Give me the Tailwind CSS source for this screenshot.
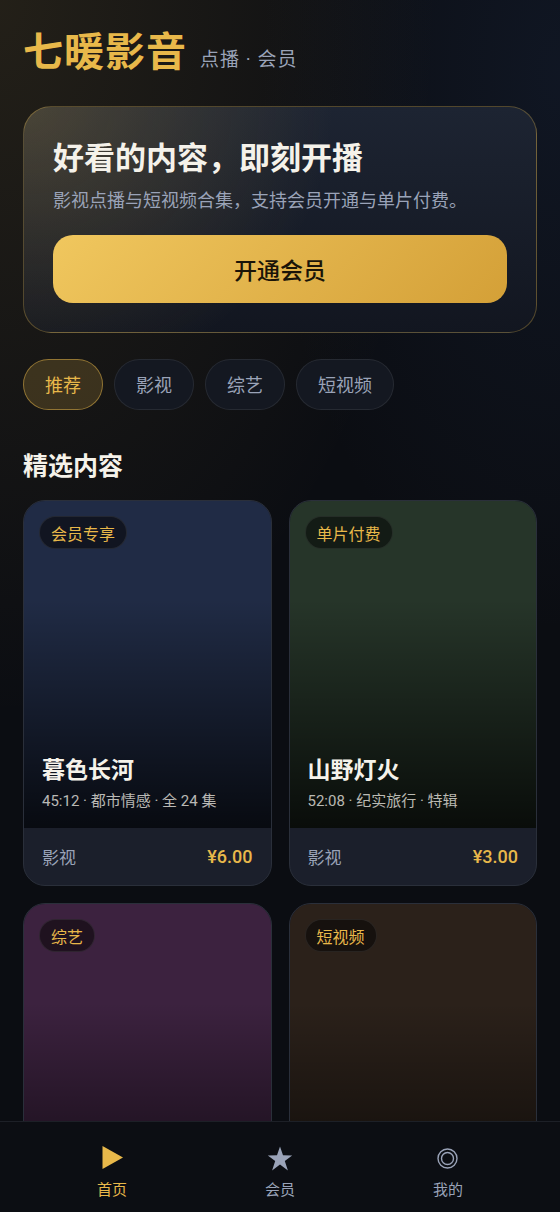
<!DOCTYPE html>
<html lang="zh-CN">
<head>
  <meta charset="UTF-8" />
  <meta name="viewport" content="width=device-width, initial-scale=1.0" />
  <title>七暖影音</title>
  <script src="https://cdn.jsdelivr.net/npm/@tailwindcss/browser@4"></script>
  <style>
    body {
      font-family: 'Noto Sans CJK SC', sans-serif;
      background:
        radial-gradient(ellipse 440px 720px at 0% 0%, rgba(232, 184, 74, .11), transparent),
        radial-gradient(ellipse 300px 560px at 100% 6%, rgba(50, 85, 150, .13), transparent),
        #0b0d12;
    }
    .num {
      font-family: Roboto, 'Noto Sans CJK SC', sans-serif;
    }
    .hero {
      background:
        radial-gradient(ellipse 310px 280px at 0% 0%, rgba(232, 184, 74, .22), transparent),
        linear-gradient(180deg, #1d2432, #121620);
    }
    .shade {
      background: linear-gradient(180deg, transparent 30%, rgba(0, 0, 0, .76));
    }
  </style>
</head>
<body class="h-dvh flex flex-col overflow-hidden text-[#f5f2ea]">
  <main class="flex-1 min-h-0 overflow-y-auto [scrollbar-width:none] px-[23px] pb-6">
    <header class="flex items-baseline gap-[13px] pt-[19px] tracking-[1px]">
      <h1 class="text-[40px] leading-[60px] font-bold text-[#e8b84a]">七暖影音</h1>
      <p class="num text-[19px] leading-[28px] text-[#9aa3b8]">点播 · 会员</p>
    </header>

    <section class="hero mt-[27px] rounded-[28px] border border-[#e8b84a]/30 px-[29px] pt-[27px] pb-[29px]">
      <h2 class="text-[31px] leading-[44px] font-bold">好看的内容，即刻开播</h2>
      <p class="mt-[5px] text-[18px] leading-[32px] text-[#9aa3b8]">影视点播与短视频合集，支持会员开通与单片付费。</p>
      <button class="mt-5 w-full h-[68px] rounded-[20px] bg-linear-135 from-[#f0c75e] to-[#d4a037] text-[23px] font-medium text-[#1a1408]">开通会员</button>
    </section>

    <div class="flex gap-[11px] mt-[26px] text-[18px] text-[#9aa3b8]">
      <button class="h-[51px] px-[21px] rounded-full border border-[#e8b84a]/50 bg-[#e8b84a]/18 text-[#e8b84a]">推荐</button>
      <button class="h-[51px] px-[21px] rounded-full border border-white/8 bg-[#141821]">影视</button>
      <button class="h-[51px] px-[21px] rounded-full border border-white/8 bg-[#141821]">综艺</button>
      <button class="h-[51px] px-[21px] rounded-full border border-white/8 bg-[#141821]">短视频</button>
    </div>

    <h2 class="mt-9 text-[25px] leading-[36px] font-bold">精选内容</h2>

    <div class="grid grid-cols-2 gap-[17px] mt-[18px]">
      <a href="#" class="block overflow-hidden rounded-[22px] border border-[#2a2f3a] bg-[#1b1f2b]">
        <div class="relative aspect-[64/85] bg-[#202b45]">
          <div class="shade h-full flex flex-col justify-end px-[18px] pb-[15px]">
            <h3 class="text-[23px] leading-[32px] font-bold">暮色长河</h3>
            <p class="num mt-[5px] text-[15px] leading-[24px] text-[#f5f2ea]/75">45:12 · 都市情感 · 全 24 集</p>
          </div>
          <span class="absolute top-[15px] left-[15px] h-[33px] px-[11px] flex items-center rounded-full border border-white/8 bg-[#0b0d12]/70 text-[16px] text-[#e8b84a]">会员专享</span>
        </div>
        <div class="h-[57px] flex items-center justify-between px-[18px]">
          <span class="text-[17px] text-[#9aa3b8]">影视</span>
          <span class="num text-[18px] font-medium text-[#e8b84a]">¥6.00</span>
        </div>
      </a>

      <a href="#" class="block overflow-hidden rounded-[22px] border border-[#2a2f3a] bg-[#1b1f2b]">
        <div class="relative aspect-[64/85] bg-[#263529]">
          <div class="shade h-full flex flex-col justify-end px-[18px] pb-[15px]">
            <h3 class="text-[23px] leading-[32px] font-bold">山野灯火</h3>
            <p class="num mt-[5px] text-[15px] leading-[24px] text-[#f5f2ea]/75">52:08 · 纪实旅行 · 特辑</p>
          </div>
          <span class="absolute top-[15px] left-[15px] h-[33px] px-[11px] flex items-center rounded-full border border-white/8 bg-[#0c110d]/70 text-[16px] text-[#e8b84a]">单片付费</span>
        </div>
        <div class="h-[57px] flex items-center justify-between px-[18px]">
          <span class="text-[17px] text-[#9aa3b8]">影视</span>
          <span class="num text-[18px] font-medium text-[#e8b84a]">¥3.00</span>
        </div>
      </a>

      <a href="#" class="block overflow-hidden rounded-[22px] border border-[#2a2f3a] bg-[#1b1f2b]">
        <div class="relative aspect-[64/85] bg-[#3c223f]">
          <div class="shade h-full"></div>
          <span class="absolute top-[15px] left-[15px] h-[33px] px-[11px] flex items-center rounded-full border border-white/8 bg-[#120b13]/70 text-[16px] text-[#e8b84a]">综艺</span>
        </div>
      </a>

      <a href="#" class="block overflow-hidden rounded-[22px] border border-[#2a2f3a] bg-[#1b1f2b]">
        <div class="relative aspect-[64/85] bg-[#2b211a]">
          <div class="shade h-full"></div>
          <span class="absolute top-[15px] left-[15px] h-[33px] px-[11px] flex items-center rounded-full border border-white/8 bg-[#0e0c0a]/70 text-[16px] text-[#e8b84a]">短视频</span>
        </div>
      </a>
    </div>
  </main>

  <nav class="grid grid-cols-3 px-7 pt-[22px] pb-[11px] border-t border-[#1d2027] bg-[#0c0e13] text-[15px] leading-[24px] text-[#9aa3b8]">
    <a href="#" class="flex flex-col items-center gap-[5px] text-[#e8b84a]">
      <svg class="w-7 h-7" viewBox="0 0 28 28" fill="currentColor"><path d="M4.5 2 25 13.500 4.5 25z"/></svg>
      首页
    </a>
    <a href="#" class="flex flex-col items-center gap-[5px]">
      <svg class="w-7 h-7" viewBox="0 0 28 28" fill="currentColor"><path d="M14 2.500 17 11.300 26.200 11.400 18.800 17 21.900 26.500 14 20.600 6.100 26.500 9.200 17 1.800 11.400 11 11.300z"/></svg>
      会员
    </a>
    <a href="#" class="flex flex-col items-center gap-[5px]">
      <svg class="w-7 h-7" viewBox="0 0 28 28" fill="none" stroke="currentColor" stroke-width="1.400"><circle cx="13.500" cy="14.500" r="9.500"/><circle cx="13.500" cy="14.500" r="6"/></svg>
      我的
    </a>
  </nav>
</body>
</html>
